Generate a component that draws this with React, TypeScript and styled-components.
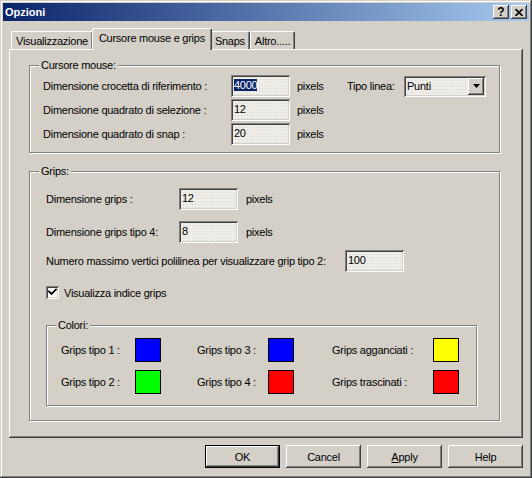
import styled, { createGlobalStyle, css } from "styled-components";

const face = "#d4d0c8";

const GlobalStyle = createGlobalStyle`
    html, body {
        margin: 0;
        padding: 0;
        background: ${face};
    }
    * {
        box-sizing: border-box;
    }
    body {
        font-family: "Liberation Sans", Arial, sans-serif;
        font-size: 11px;
        letter-spacing: -0.25px;
        color: #000;
    }
`;

const raised = css`
    box-shadow: inset -1px -1px #404040, inset 1px 1px #fff,
        inset -2px -2px #808080, inset 2px 2px ${face};
`;

const sunken = css`
    box-shadow: inset 1px 1px #808080, inset -1px -1px #fff,
        inset 2px 2px #404040, inset -2px -2px ${face};
`;

const Window = styled.div`
    width: 532px;
    height: 478px;
    padding: 3px;
    display: flex;
    flex-direction: column;
    background: ${face};
    box-shadow: inset -1px -1px #404040, inset 1px 1px ${face},
        inset -2px -2px #808080, inset 2px 2px #fff;
`;

const TitleBar = styled.div`
    height: 18px;
    display: flex;
    align-items: center;
    padding: 0 2px 0 2px;
    background: linear-gradient(to right, #0a246a, #a6caf0);
    color: #fff;
    font-weight: bold;
    letter-spacing: 0;
    .caption {
        flex: 1;
    }
`;

const TitleButton = styled.button`
    width: 16px;
    height: 14px;
    margin-left: 2px;
    padding: 0;
    border: none;
    background: ${face};
    ${raised};
    display: flex;
    align-items: center;
    justify-content: center;
    font-family: "Liberation Sans", Arial, sans-serif;
    font-weight: bold;
    font-size: 12px;
    line-height: 1;
    color: #000;
`;

const Body = styled.div`
    flex: 1;
    display: flex;
    flex-direction: column;
    padding: 7px 6px 0 6px;
`;

const TabStrip = styled.div`
    display: flex;
    align-items: flex-end;
    height: 21px;
    padding-left: 2px;
`;

const Tab = styled.div<{ $active?: boolean }>`
    position: relative;
    height: 18px;
    padding: 0 4px;
    display: flex;
    align-items: center;
    background: ${face};
    border-top: 1px solid #fff;
    border-left: 1px solid #fff;
    border-right: 1px solid #404040;
    border-radius: 2px 2px 0 0;
    box-shadow: inset -1px 0 #808080;
    white-space: nowrap;
    ${(p) =>
        p.$active &&
        css`
            z-index: 1;
            height: 22px;
            margin: 0 -2px -1px -1px;
            padding: 0 6px 3px 6px;
        `}
`;

const Panel = styled.div`
    flex: 1;
    position: relative;
    padding: 16px 23px 0 20px;
    box-shadow: inset -1px -1px #404040, inset 1px 1px #fff,
        inset -2px -2px #808080;
`;

const Group = styled.div<{ $mt?: number }>`
    margin-top: ${(p) => p.$mt ?? 0}px;
    border: 1px solid #808080;
    box-shadow: inset 1px 1px #fff, 1px 1px #fff;
    display: flex;
    flex-direction: column;
`;

const Legend = styled.div`
    align-self: flex-start;
    margin: -7px 0 0 9px;
    padding: 0 2px;
    height: 13px;
    line-height: 13px;
    background: ${face};
`;

const CursorGrid = styled.div`
    display: grid;
    grid-template-columns: 188px 59px 57px 57px 82px;
    grid-auto-rows: 22px;
    row-gap: 2px;
    align-items: center;
    padding: 3px 0 7px 13px;
`;

const Label = styled.span<{ $pl?: number }>`
    padding-left: ${(p) => p.$pl ?? 0}px;
    white-space: nowrap;
`;

const Field = styled.div<{ $w?: number }>`
    width: ${(p) => p.$w ?? 59}px;
    height: 22px;
    padding: 3px 3px 0 3px;
    line-height: 15px;
    background-color: #eeede8;
    background-image: radial-gradient(#d9d6ce 0.6px, transparent 0.8px);
    background-size: 3px 3px;
    ${sunken};
    .sel {
        background: #0a246a;
        color: #fff;
    }
`;

const Combo = styled(Field)`
    height: 21px;
    display: flex;
    padding: 2px 2px 2px 3px;
    justify-content: space-between;
    .text {
        line-height: 16px;
    }
`;

const ComboButton = styled.div`
    width: 16px;
    height: 17px;
    background: ${face};
    ${raised};
    display: flex;
    align-items: center;
    justify-content: center;
`;

const GripsBody = styled.div`
    display: flex;
    flex-direction: column;
    padding: 10px 0 14px 16px;
`;

const Row = styled.div<{ $mt?: number }>`
    display: flex;
    align-items: center;
    margin-top: ${(p) => p.$mt ?? 0}px;
`;

const CheckBox = styled.div`
    width: 13px;
    height: 13px;
    background: #fff;
    ${sunken};
    display: flex;
    align-items: center;
    justify-content: center;
    margin-right: 5px;
`;

const ColorGrid = styled.div`
    display: grid;
    grid-template-columns: 74px 26px 36px 71px 26px 38px 101px 26px;
    grid-auto-rows: 24px;
    row-gap: 8px;
    align-items: center;
    padding: 6px 0 11px 14px;
`;

const Swatch = styled.div<{ $color: string }>`
    width: 26px;
    height: 24px;
    border: 1px solid #000;
    background: ${(p) => p.$color};
`;

const Footer = styled.div`
    display: flex;
    justify-content: flex-end;
    gap: 6px;
    padding: 7px 0 7px 0;
`;

const Button = styled.button<{ $default?: boolean }>`
    width: 75px;
    height: 23px;
    padding: 0;
    border: none;
    background: ${face};
    font-family: "Liberation Sans", Arial, sans-serif;
    font-size: 11px;
    letter-spacing: -0.25px;
    color: #000;
    ${raised};
    ${(p) =>
        p.$default &&
        css`
            box-shadow: inset 0 0 0 1px #000, inset -2px -2px #404040,
                inset 2px 2px #fff, inset -3px -3px #808080;
        `}
`;

const Cell = styled.div`
    display: flex;
    align-items: center;
`;

function Arrow() {
    return (
        <svg width="7" height="4" viewBox="0 0 7 4">
            <path d="M0 0h7L3.5 4z" fill="#000" />
        </svg>
    );
}

function Check() {
    return (
        <svg width="9" height="9" viewBox="0 0 9 9">
            <path
                d="M1 3.5 L3.5 6 L8 1.5"
                stroke="#000"
                strokeWidth="1.8"
                fill="none"
                strokeLinecap="square"
            />
        </svg>
    );
}

const colori = [
    ["Grips tipo 1 :", "#0000ff", "Grips tipo 3 :", "#0000ff", "Grips agganciati :", "#ffff00"],
    ["Grips tipo 2 :", "#00ff00", "Grips tipo 4 :", "#ff0000", "Grips trascinati :", "#ff0000"],
];

function App() {
    return (
        <>
            <GlobalStyle />
            <Window>
                <TitleBar>
                    <span className="caption">Opzioni</span>
                    <TitleButton>?</TitleButton>
                    <TitleButton>
                        <svg width="8" height="7" viewBox="0 0 8 7">
                            <path
                                d="M0.5 0 L7.5 7 M7.5 0 L0.5 7"
                                stroke="#000"
                                strokeWidth="1.6"
                            />
                        </svg>
                    </TitleButton>
                </TitleBar>
                <Body>
                    <TabStrip>
                        <Tab>Visualizzazione</Tab>
                        <Tab $active>Cursore mouse e grips</Tab>
                        <Tab>Snaps</Tab>
                        <Tab>Altro.....</Tab>
                    </TabStrip>
                    <Panel>
                        <Group>
                            <Legend>Cursore mouse:</Legend>
                            <CursorGrid>
                                <Label>Dimensione crocetta di riferimento :</Label>
                                <Field>
                                    <span className="sel">4000</span>
                                </Field>
                                <Label $pl={7}>pixels</Label>
                                <Label>Tipo linea:</Label>
                                <Combo $w={82}>
                                    <span className="text">Punti</span>
                                    <ComboButton>
                                        <Arrow />
                                    </ComboButton>
                                </Combo>

                                <Label>Dimensione quadrato di selezione :</Label>
                                <Field>12</Field>
                                <Label $pl={7}>pixels</Label>
                                <span />
                                <span />

                                <Label>Dimensione quadrato di snap :</Label>
                                <Field>20</Field>
                                <Label $pl={7}>pixels</Label>
                            </CursorGrid>
                        </Group>

                        <Group $mt={18}>
                            <Legend>Grips:</Legend>
                            <GripsBody>
                                <Row>
                                    <Label style={{ width: 133 }}>Dimensione grips :</Label>
                                    <Field>12</Field>
                                    <Label $pl={8}>pixels</Label>
                                </Row>
                                <Row $mt={11}>
                                    <Label style={{ width: 133 }}>Dimensione grips tipo 4:</Label>
                                    <Field>8</Field>
                                    <Label $pl={8}>pixels</Label>
                                </Row>
                                <Row $mt={7}>
                                    <Label style={{ width: 299 }}>
                                        Numero massimo vertici polilinea per visualizzare grip tipo 2:
                                    </Label>
                                    <Field>100</Field>
                                </Row>
                                <Row $mt={14}>
                                    <CheckBox>
                                        <Check />
                                    </CheckBox>
                                    <Label>Visualizza indice grips</Label>
                                </Row>
                                <Group $mt={26} style={{ marginRight: 22 }}>
                                    <Legend>Colori:</Legend>
                                    <ColorGrid>
                                        {colori.map((row, i) =>
                                            [0, 2, 4].map((k) => [
                                                <Cell key={`${i}-${k}-l`}>{row[k]}</Cell>,
                                                <Swatch key={`${i}-${k}-s`} $color={row[k + 1]} />,
                                                k < 4 ? <span key={`${i}-${k}-g`} /> : null,
                                            ])
                                        )}
                                    </ColorGrid>
                                </Group>
                            </GripsBody>
                        </Group>
                    </Panel>
                    <Footer>
                        <Button $default>OK</Button>
                        <Button>Cancel</Button>
                        <Button>
                            <u>A</u>pply
                        </Button>
                        <Button>Help</Button>
                    </Footer>
                </Body>
            </Window>
        </>
    );
}

export default App;
